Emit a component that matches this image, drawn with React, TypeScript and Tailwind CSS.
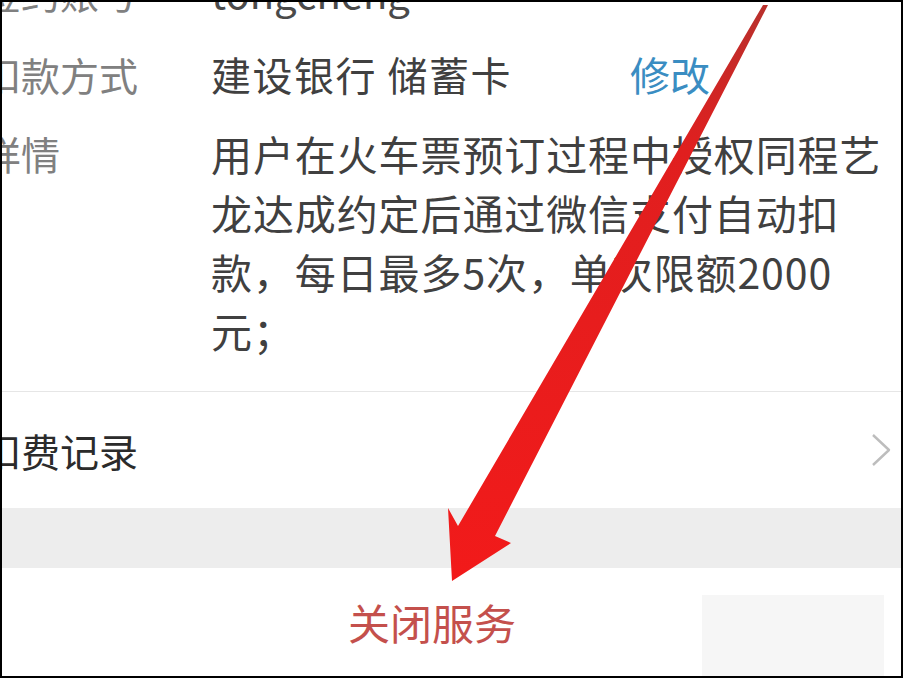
const cjk = { fontFamily: '"Noto Sans CJK SC", "Noto Sans", sans-serif' }

const Chevron = () => (
  <svg width="22" height="34" viewBox="0 0 22 34" fill="none">
    <path d="M3 2 L19 17 L3 32" stroke="#bdbdbd" strokeWidth="2.4" strokeLinejoin="round" />
  </svg>
)

// red pointer drawn over the page, from the top edge down to the close button
const Pointer = () => (
  <svg className="absolute inset-0 pointer-events-none" width="903" height="678" viewBox="0 0 903 678">
    <defs>
      <linearGradient id="shaft" x1="0" y1="0" x2="0" y2="1">
        <stop offset="0" stopColor="#b8302c" />
        <stop offset="0.25" stopColor="#e01f1f" />
        <stop offset="1" stopColor="#f21a1a" />
      </linearGradient>
    </defs>
    <polygon
      points="761,3 766,3 493,534 509,541 450,579 446,506 456,524"
      fill="url(#shaft)"
    />
  </svg>
)

const App = () => {
  return (
    <div className="w-[903px] h-[678px] relative overflow-hidden bg-white border-2 border-black" style={cjk}>
      <div className="flex flex-col -mt-[51px]">
        <div className="flex items-center h-[82px] -ml-[20px]">
          <span className="w-[229px] text-[39px] text-[#808080]">签约账号</span>
          <span className="text-[40px] text-[#4a4a4a]">tongcheng</span>
        </div>

        <div className="flex items-center h-[82px] -ml-[20px]">
          <span className="w-[229px] text-[39px] text-[#808080]">扣款方式</span>
          <span className="text-[40px] tracking-[1.5px] text-[#404040]">建设银行 储蓄卡</span>
          <span className="ml-[118px] text-[40px] text-[#3a8dc2]">修改</span>
        </div>

        <div className="flex items-start pt-[9px] pb-[31px] -ml-[20px] border-b border-[#e6e6e6]">
          <span className="w-[229px] shrink-0 text-[39px] leading-[59px] text-[#808080]">详情</span>
          <p className="w-[680px] text-[41px] leading-[59px] tracking-[0.9px] text-[#404040]">
            用户在火车票预订过程中授权同程艺龙达成约定后通过微信支付自动扣款，每日最多5次，单次限额2000元；
          </p>
        </div>

        <div className="flex items-center justify-between h-[116px] -ml-[20px] pr-[9px]">
          <span className="text-[39px] text-[#2b2b2b]">扣费记录</span>
          <Chevron />
        </div>

        <div className="h-[60px] bg-[#ededed]" />

        <div className="flex items-start pt-[27px]">
          <div className="w-[700px] flex justify-center pl-[160px] -mt-[5px]">
            <span className="text-[42px] text-[#c4504c]">关闭服务</span>
          </div>
          <div className="w-[182px] h-[90px] bg-[#f6f6f6]" />
        </div>
      </div>
      <Pointer />
    </div>
  )
}

export default App
